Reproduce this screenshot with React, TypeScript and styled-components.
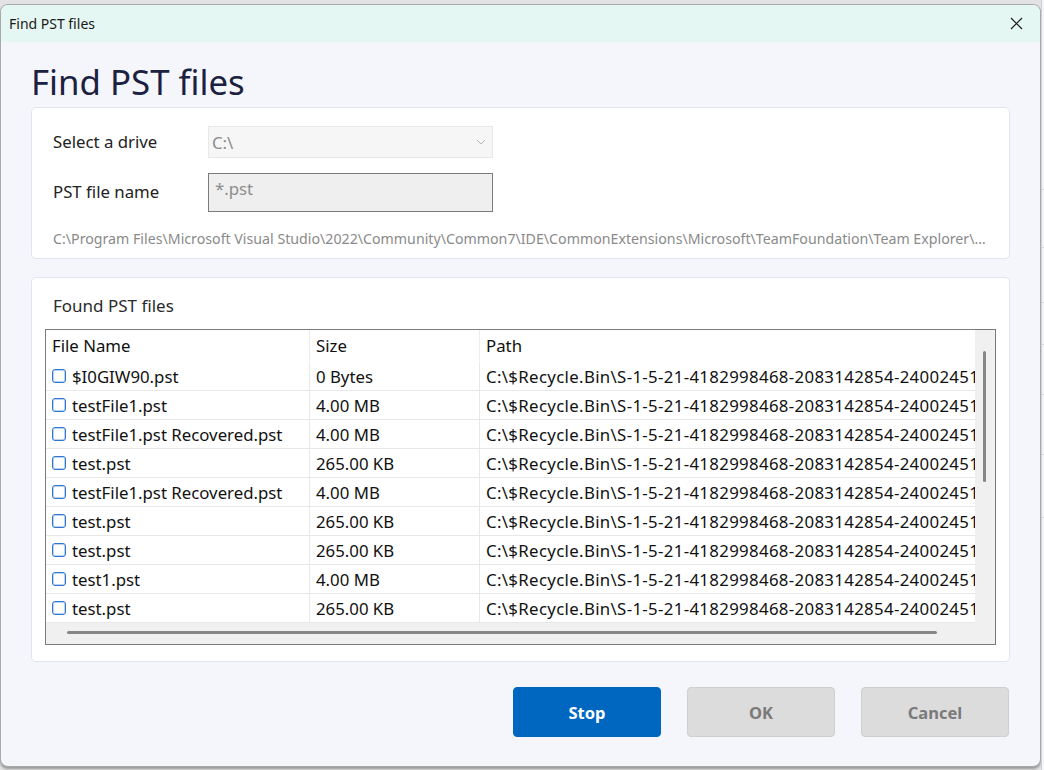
import React from "react";
import styled, { createGlobalStyle } from "styled-components";

const GlobalStyle = createGlobalStyle`
  html, body {
    margin: 0;
    padding: 0;
    background: #e3e3e3;
  }
  body {
    font-family: "Noto Sans", "Open Sans", "DejaVu Sans", sans-serif;
    color: #1f1f1f;
  }
  * {
    box-sizing: border-box;
  }
`;

const Desktop = styled.div`
  display: flex;
  height: 770px;
  padding-top: 4px;
  overflow: hidden;
`;

const Window = styled.div`
  display: flex;
  flex-direction: column;
  flex: 0 0 1041px;
  height: 763px;
  border: 1px solid #a9a9ad;
  border-radius: 8px;
  background: #f5f6fb;
  overflow: hidden;
  box-shadow: 0 2px 3px rgba(0, 0, 0, 0.35);
`;

const BackPane = styled.div`
  flex: 1;
  display: flex;
  flex-direction: column;
  margin-top: -4px;
  padding-top: 130px;
  background: #f3f4f8;
  border-left: 1px solid #cfd0d4;
`;

const BackRow = styled.div<{ $h: number }>`
  height: ${(p) => p.$h}px;
  border-bottom: 1px solid #d6d7db;
`;

const TitleBar = styled.div`
  display: flex;
  align-items: center;
  justify-content: space-between;
  height: 37px;
  padding: 0 14px 0 8px;
  background: #e5f7f2;
  font-size: 14px;
  color: #1a1a1a;
`;

const CloseButton = styled.button`
  display: flex;
  align-items: center;
  justify-content: center;
  width: 20px;
  height: 20px;
  padding: 0;
  border: none;
  background: transparent;
  color: #1a1a1a;
`;

const Body = styled.div`
  flex: 1;
  display: flex;
  flex-direction: column;
  padding: 18px 30px 0 30px;
`;

const Heading = styled.h1`
  margin: 0 0 3px 0;
  height: 44px;
  font-size: 34.8px;
  line-height: 44px;
  font-weight: 400;
  color: #1b2140;
`;

const Card = styled.section`
  background: #ffffff;
  border: 1px solid #e2e5ee;
  border-radius: 5px;
`;

const DriveCard = styled(Card)`
  padding: 18px 21px 9px 21px;
`;

const ResultsCard = styled(Card)`
  margin-top: 18px;
  padding: 17px 13px 16px 13px;
`;

const FormGrid = styled.div`
  display: grid;
  grid-template-columns: 155px 285px;
  row-gap: 15px;
  align-items: center;
`;

const FieldLabel = styled.label`
  font-size: 16.8px;
  color: #222222;
  margin-top: -2px;
`;

const DriveSelect = styled.div`
  display: flex;
  align-items: center;
  justify-content: space-between;
  height: 32px;
  padding: 0 6px 0 3px;
  background: #f6f6f6;
  border: 1px solid #e8e8e8;
  color: #8c8c8c;
  font-size: 16.8px;
`;

const NameInput = styled.div`
  height: 39px;
  padding: 3px 6px;
  background: #efefef;
  border: 1px solid #7b7b7b;
  color: #8c8c8c;
  font-size: 16.8px;
`;

const PathHint = styled.div`
  margin-top: 17px;
  font-size: 14.2px;
  line-height: 20px;
  color: #8a8a8a;
  white-space: nowrap;
  overflow: hidden;
  text-overflow: ellipsis;
`;

const Caption = styled.div`
  margin: 0 0 12px 8px;
  font-size: 17px;
  line-height: 22px;
  color: #2a2a2a;
`;

const TableFrame = styled.div`
  display: grid;
  grid-template-columns: 1fr 20px;
  grid-template-rows: 293px 1fr;
  height: 316px;
  border: 1px solid #7a7a7a;
  background: #f0f0f0;
`;

const Viewport = styled.div`
  background: #ffffff;
  overflow: hidden;
`;

const GridRow = styled.div<{ $header?: boolean }>`
  display: grid;
  grid-template-columns: 264px 170px 760px;
  height: ${(p) => (p.$header ? 32 : 29)}px;
  border-bottom: 1px solid ${(p) => (p.$header ? "transparent" : "#e8e8e8")};
  font-size: 16.8px;
  color: #111111;
`;

const Cell = styled.div<{ $last?: boolean; $header?: boolean; $wide?: boolean }>`
  display: flex;
  align-items: center;
  gap: 6px;
  padding-left: 6px;
  white-space: nowrap;
  overflow: hidden;
  letter-spacing: ${(p) => (p.$wide ? "0.34px" : "normal")};
  border-right: 1px solid ${(p) => (p.$last ? "transparent" : p.$header ? "#ececec" : "#e8e8e8")};
`;

const CheckBox = styled.span`
  flex: 0 0 auto;
  width: 14px;
  height: 14px;
  border: 1px solid #2f76d2;
  border-radius: 3px;
  background: #ffffff;
  box-shadow: inset 0 0 0 1px rgba(63, 127, 212, 0.35);
`;

const VTrack = styled.div`
  padding: 21px 0 0 8px;
`;

const VThumb = styled.div`
  width: 3px;
  height: 131px;
  border-radius: 2px;
  background: #868686;
`;

const HTrack = styled.div`
  padding: 8px 0 0 21px;
`;

const HThumb = styled.div`
  width: 870px;
  height: 3px;
  border-radius: 2px;
  background: #868686;
`;

const Corner = styled.div`
  background: #f0f0f0;
`;

const Footer = styled.div`
  display: flex;
  justify-content: flex-end;
  gap: 26px;
  padding: 25px 1px 0 0;
`;

const Button = styled.button<{ $primary?: boolean }>`
  width: 148px;
  height: 50px;
  border-radius: 4px;
  border: 1px solid ${(p) => (p.$primary ? "#0067c0" : "#cfcfcf")};
  background: ${(p) => (p.$primary ? "#0067c0" : "#dcdcdc")};
  color: ${(p) => (p.$primary ? "#ffffff" : "#7a7a7a")};
  font-family: inherit;
  font-size: 16.5px;
  font-weight: 700;
`;

const PATH = "C:\\$Recycle.Bin\\S-1-5-21-4182998468-2083142854-2400245176-1001\\";

const files = [
  { name: "$I0GIW90.pst", size: "0 Bytes" },
  { name: "testFile1.pst", size: "4.00 MB" },
  { name: "testFile1.pst Recovered.pst", size: "4.00 MB" },
  { name: "test.pst", size: "265.00 KB" },
  { name: "testFile1.pst Recovered.pst", size: "4.00 MB" },
  { name: "test.pst", size: "265.00 KB" },
  { name: "test.pst", size: "265.00 KB" },
  { name: "test1.pst", size: "4.00 MB" },
  { name: "test.pst", size: "265.00 KB" },
];

const Chevron = () => (
  <svg width="10" height="6" viewBox="0 0 10 6" fill="none">
    <path d="M1 1l4 4 4-4" stroke="#b5b5b5" strokeWidth="1" />
  </svg>
);

const App: React.FC = () => {
  return (
    <>
      <GlobalStyle />
      <Desktop>
        <Window>
          <TitleBar>
            <span>Find PST files</span>
            <CloseButton aria-label="Close">
              <svg width="13" height="13" viewBox="0 0 13 13">
                <path d="M1 1l11 11M12 1L1 12" stroke="#1a1a1a" strokeWidth="1.2" />
              </svg>
            </CloseButton>
          </TitleBar>
          <Body>
            <Heading>Find PST files</Heading>
            <DriveCard>
              <FormGrid>
                <FieldLabel>Select a drive</FieldLabel>
                <DriveSelect>
                  <span>C:\</span>
                  <Chevron />
                </DriveSelect>
                <FieldLabel>PST file name</FieldLabel>
                <NameInput>*.pst</NameInput>
              </FormGrid>
              <PathHint>
                C:\Program Files\Microsoft Visual Studio\2022\Community\Common7\IDE\CommonExtensions\Microsoft\TeamFoundation\Team Explorer\Git\mingw64\bin
              </PathHint>
            </DriveCard>
            <ResultsCard>
              <Caption>Found PST files</Caption>
              <TableFrame>
                <Viewport>
                  <GridRow $header>
                    <Cell $header>File Name</Cell>
                    <Cell $header>Size</Cell>
                    <Cell $header $last>Path</Cell>
                  </GridRow>
                  {files.map((f, i) => (
                    <GridRow key={i}>
                      <Cell>
                        <CheckBox />
                        {f.name}
                      </Cell>
                      <Cell>{f.size}</Cell>
                      <Cell $last $wide>{PATH + f.name}</Cell>
                    </GridRow>
                  ))}
                </Viewport>
                <VTrack>
                  <VThumb />
                </VTrack>
                <HTrack>
                  <HThumb />
                </HTrack>
                <Corner />
              </TableFrame>
            </ResultsCard>
            <Footer>
              <Button $primary>Stop</Button>
              <Button disabled>OK</Button>
              <Button disabled>Cancel</Button>
            </Footer>
          </Body>
        </Window>
        <BackPane>
          <BackRow $h={60} />
          <BackRow $h={58} />
          <BackRow $h={55} />
          <BackRow $h={42} />
          <BackRow $h={50} />
          <BackRow $h={60} />
          <BackRow $h={63} />
        </BackPane>
      </Desktop>
    </>
  );
};

export default App;
